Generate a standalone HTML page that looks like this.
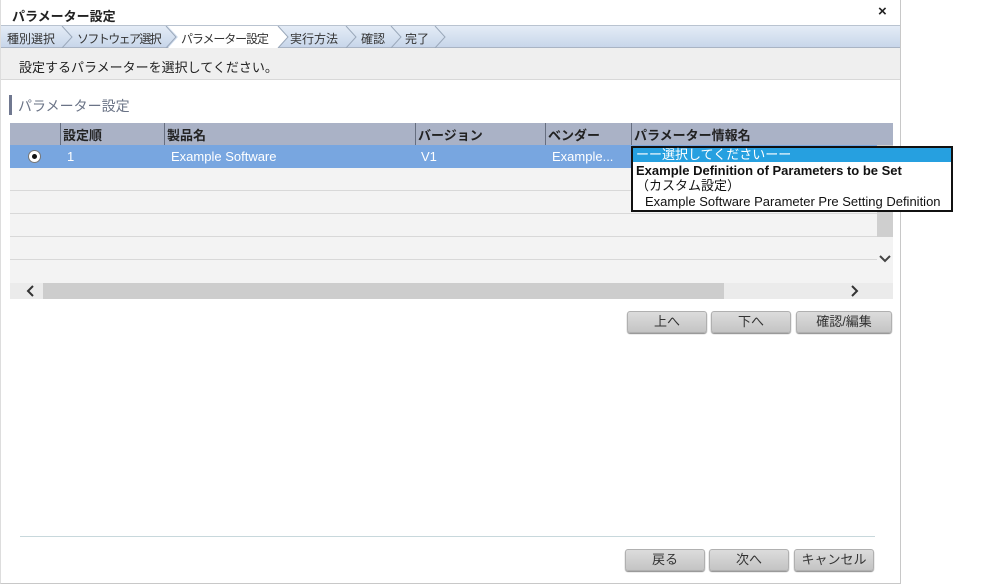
<!DOCTYPE html>
<html><head><meta charset="utf-8"><style>
*{margin:0;padding:0;box-sizing:border-box}
body{width:981px;height:585px;background:#fff;font-family:"Liberation Sans","Noto Sans CJK JP",sans-serif;font-size:13px;color:#222;position:relative;overflow:hidden}
.a{position:absolute}
.dlg{left:0;top:0;width:901px;height:584px;border-right:1px solid #c8c8c8;border-bottom:1px solid #c8c8c8;border-left:1px solid #ddd}
.steps{left:1px;top:25px;width:899px;height:23px;background:linear-gradient(#e4ecf6,#c8d6ea);border-top:1px solid #b9c3d0;border-bottom:1px solid #a9b4c4}
.st{position:absolute;top:4px;font-size:12px;color:#333;white-space:nowrap}
.btn{position:absolute;height:22px;background:linear-gradient(#dcdcdc,#c4c4c4);border:1px solid #b0b0b0;border-radius:3px;text-align:center;line-height:20px;font-size:13px;color:#333;box-shadow:0 1px 1px #888}
.th{position:absolute;top:3px;font-weight:bold;font-size:13px;color:#222}
.row{position:absolute;left:10px;width:867px;height:1px;background:#d8d8d8}
</style></head><body>
<div class="a dlg"></div>
<div class="a" style="left:12px;top:6px;font-weight:bold;font-size:13px">パラメーター設定</div>
<div class="a" style="left:878px;top:3px;font-weight:bold;font-size:15px">×</div>
<div class="a steps">
<svg class="a" style="left:0;top:0" width="460" height="22"><g fill="none" stroke="#9aa8ba" stroke-width="1">
<path d="M61 0L71 11L61 22"/><path d="M345 0L355 11L345 22"/><path d="M390 0L400 11L390 22"/><path d="M434 0L444 11L434 22"/></g>
<path d="M167 0h110L287 11L277 22H167L177 11Z" fill="#fff"/>
<path d="M165 0L175 11L165 22M277 0L287 11L277 22" fill="none" stroke="#9aa8ba"/></svg>
<span class="st" style="left:6px">種別選択</span>
<span class="st" style="left:76px;letter-spacing:-1.6px">ソフトウェア選択</span>
<span class="st" style="left:180px;letter-spacing:-1.1px">パラメーター設定</span>
<span class="st" style="left:289px">実行方法</span>
<span class="st" style="left:360px">確認</span>
<span class="st" style="left:404px">完了</span>
</div>
<div class="a" style="left:1px;top:48px;width:899px;height:32px;background:#efefef;border-bottom:1px solid #d8d8d8"></div>
<div class="a" style="left:19px;top:57px;font-size:13px">設定するパラメーターを選択してください。</div>
<div class="a" style="left:9px;top:95px;width:3px;height:20px;background:#707890"></div>
<div class="a" style="left:18px;top:96px;font-size:14px;color:#6a7386">パラメーター設定</div>
<div class="a" style="left:10px;top:123px;width:883px;height:176px;background:#f3f3f3"></div>
<div class="a" style="left:10px;top:123px;width:883px;height:22px;background:#aab2c6"></div>
<div class="a" style="left:60px;top:123px;width:1px;height:22px;background:#666e80"></div>
<div class="a" style="left:164px;top:123px;width:1px;height:22px;background:#666e80"></div>
<div class="a" style="left:415px;top:123px;width:1px;height:22px;background:#666e80"></div>
<div class="a" style="left:545px;top:123px;width:1px;height:22px;background:#666e80"></div>
<div class="a" style="left:631px;top:123px;width:1px;height:22px;background:#666e80"></div>
<span class="th" style="left:63px;top:125px">設定順</span>
<span class="th" style="left:167px;top:125px">製品名</span>
<span class="th" style="left:418px;top:125px">バージョン</span>
<span class="th" style="left:548px;top:125px">ベンダー</span>
<span class="th" style="left:634px;top:125px">パラメーター情報名</span>
<div class="a" style="left:10px;top:145px;width:867px;height:23px;background:#78a6e0"></div>
<div class="a" style="left:28px;top:150px;width:13px;height:13px;border-radius:50%;background:#fff;border:1px solid #777"></div>
<div class="a" style="left:32px;top:154px;width:5px;height:5px;border-radius:50%;background:#111"></div>
<div class="a" style="left:67px;top:149px;color:#fff">1</div>
<div class="a" style="left:171px;top:149px;color:#fff">Example Software</div>
<div class="a" style="left:421px;top:149px;color:#fff">V1</div>
<div class="a" style="left:552px;top:149px;color:#fff">Example...</div>
<div class="row" style="top:190px"></div><div class="row" style="top:213px"></div><div class="row" style="top:236px"></div><div class="row" style="top:259px"></div>
<div class="a" style="left:877px;top:145px;width:16px;height:92px;background:#cfcfcf"></div>
<svg class="a" style="left:877px;top:252px" width="16" height="14"><path d="M3 4l5 5 5-5" fill="none" stroke="#444" stroke-width="2"/></svg>
<div class="a" style="left:10px;top:283px;width:883px;height:16px;background:#ebebeb"></div>
<div class="a" style="left:43px;top:283px;width:681px;height:16px;background:#cdcdcd"></div>
<svg class="a" style="left:24px;top:284px" width="14" height="14"><path d="M9 2L4 7l5 5" fill="none" stroke="#333" stroke-width="2"/></svg>
<svg class="a" style="left:847px;top:284px" width="14" height="14"><path d="M5 2l5 5-5 5" fill="none" stroke="#333" stroke-width="2"/></svg>
<div class="a" style="left:631px;top:146px;width:322px;height:66px;background:#fff;border:2px solid #111"></div>
<div class="a" style="left:633px;top:148px;width:318px;height:14px;background:#26a0e0"></div>
<div class="a" style="left:636px;top:147px;color:#fff;font-size:13px;line-height:15px">ーー選択してくださいーー</div>
<div class="a" style="left:636px;top:163px;font-weight:bold;font-size:13px;line-height:15px;color:#111">Example Definition of Parameters to be Set</div>
<div class="a" style="left:636px;top:178px;font-size:13px;line-height:15px;color:#111">（カスタム設定）</div>
<div class="a" style="left:645px;top:194px;font-size:13px;line-height:15px;color:#111">Example Software Parameter Pre Setting Definition</div>
<div class="btn" style="left:627px;top:311px;width:80px">上へ</div>
<div class="btn" style="left:711px;top:311px;width:80px">下へ</div>
<div class="btn" style="left:796px;top:311px;width:96px">確認/編集</div>
<div class="a" style="left:20px;top:536px;width:855px;height:1px;background:#c8d8dc"></div>
<div class="btn" style="left:625px;top:549px;width:80px">戻る</div>
<div class="btn" style="left:709px;top:549px;width:80px">次へ</div>
<div class="btn" style="left:794px;top:549px;width:80px">キャンセル</div>
</body></html>
